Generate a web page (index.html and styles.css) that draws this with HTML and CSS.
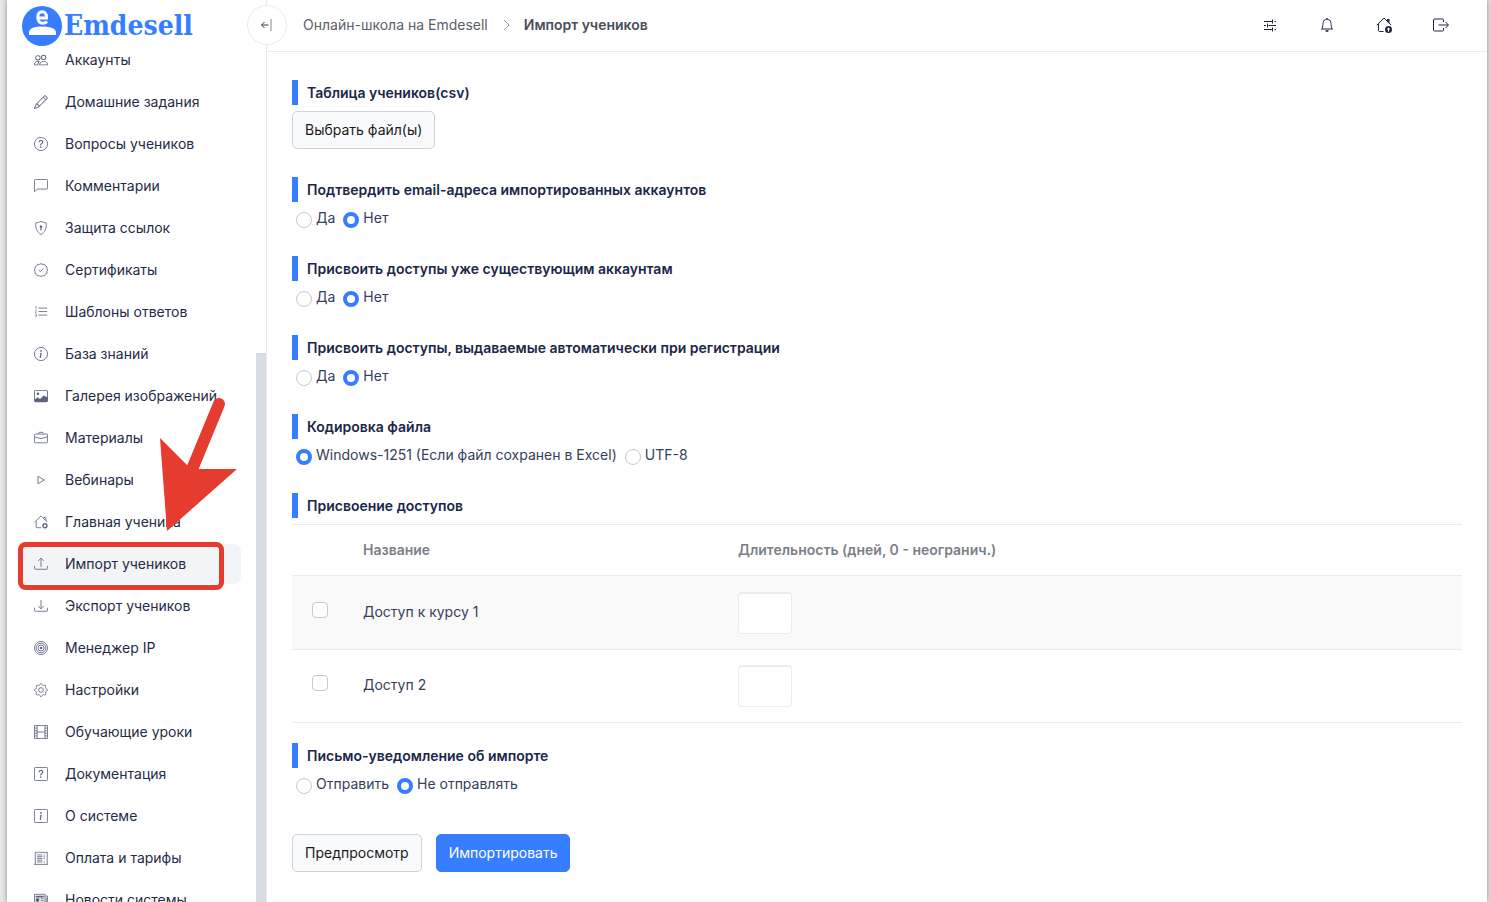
FILE: index.html
```html
<!DOCTYPE html>
<html lang="ru">
<head>
<meta charset="utf-8">
<title>Импорт учеников</title>
<link rel="stylesheet" href="styles.css">
</head>
<body>
<div class="app">
  <aside class="sidebar">
    <a class="logo" href="#">
      <svg class="logo-mark" viewBox="0 0 40 40" aria-hidden="true">
        <circle cx="20" cy="20" r="20" fill="#377dff"/>
        <path d="M7 29v-2.500c0-4 5-6 13-6s14 2 14 6V29z" fill="#fff"/>
        <ellipse cx="20.500" cy="12" rx="7.500" ry="8.500" fill="#377dff"/>
        <path d="M16.500 12H24.500C24.500 7.800 23 5.800 20.300 5.800C17.500 5.800 15.800 8 15.800 11.500C15.800 15 17.700 17.300 20.800 17.300C22.700 17.300 24 16.500 25 15.500" fill="none" stroke="#fff" stroke-width="3"/>
      </svg>
      <span>Emdesell</span>
    </a>
    <nav class="menu">
      <a class="item" href="#"><svg class="icon" viewBox="0 0 16 16"><path d="M15 14s1 0 1-1-1-4-5-4-5 3-5 4 1 1 1 1h8zm-7.978-1A.261.261 0 0 1 7 12.996c.001-.264.167-1.030.76-1.720C8.312 10.629 9.282 10 11 10c1.717 0 2.687.630 3.240 1.276.593.690.758 1.457.760 1.720l-.008.002a.274.274 0 0 1-.014.002H7.022zM11 7a2 2 0 1 0 0-4 2 2 0 0 0 0 4zm3-2a3 3 0 1 1-6 0 3 3 0 0 1 6 0zM6.936 9.280a5.880 5.880 0 0 0-1.230-.247A7.350 7.350 0 0 0 5 9c-4 0-5 3-5 4 0 .667.333 1 1 1h4.216A2.238 2.238 0 0 1 5 13c0-1.010.377-2.042 1.090-2.904.243-.294.526-.569.846-.816zM4.920 10A5.493 5.493 0 0 0 4 13H1c0-.260.164-1.030.760-1.724.545-.636 1.492-1.256 3.160-1.275zM1.500 5.500a3 3 0 1 1 6 0 3 3 0 0 1-6 0zm3-2a2 2 0 1 0 0 4 2 2 0 0 0 0-4z"/></svg>Аккаунты</a>
      <a class="item" href="#"><svg class="icon" viewBox="0 0 16 16"><path d="M12.146.146a.5.5 0 0 1 .708 0l3 3a.5.5 0 0 1 0 .708l-10 10a.5.5 0 0 1-.168.110l-5 2a.5.5 0 0 1-.650-.650l2-5a.5.5 0 0 1 .110-.168l10-10zM11.207 2.500 13.500 4.793 14.793 3.500 12.500 1.207 11.207 2.500zm1.586 3L10.500 3.207 4 9.707V10h.5a.5.5 0 0 1 .5.5v.5h.5a.5.5 0 0 1 .5.5v.5h.293l6.500-6.500zm-9.761 5.175-.106.106-1.528 3.821 3.821-1.528.106-.106A.5.5 0 0 1 5 12.500V12h-.5a.5.5 0 0 1-.5-.5V11h-.5a.5.5 0 0 1-.468-.325z"/></svg>Домашние задания</a>
      <a class="item" href="#"><svg class="icon" viewBox="0 0 16 16"><circle class="line" cx="8" cy="8" r="7.500"/><path d="M5.255 5.786a.237.237 0 0 0 .241.247h.825c.138 0 .248-.113.266-.250.090-.656.540-1.134 1.342-1.134.686 0 1.314.343 1.314 1.168 0 .635-.374.927-.965 1.371-.673.489-1.206 1.060-1.168 1.987l.003.217a.250.250 0 0 0 .250.246h.811a.250.250 0 0 0 .250-.250v-.105c0-.718.273-.927 1.010-1.486.609-.463 1.244-.977 1.244-2.056 0-1.511-1.276-2.241-2.673-2.241-1.267 0-2.655.590-2.750 2.286zm1.557 5.763c0 .533.425.927 1.010.927.609 0 1.028-.394 1.028-.927 0-.552-.420-.940-1.029-.940-.584 0-1.009.388-1.009.940z"/></svg>Вопросы учеников</a>
      <a class="item" href="#"><svg class="icon" viewBox="0 0 16 16"><path class="line" d="M1.500.5h13a1 1 0 0 1 1 1v9a1 1 0 0 1-1 1H4.500a2 2 0 0 0-1.200.500L.5 14.500v-13a1 1 0 0 1 1-1z"/></svg>Комментарии</a>
      <a class="item" href="#"><svg class="icon" viewBox="0 0 16 16"><path class="line" d="M8 .5C6.500 1 4 2 2 2.400 1.500 8 3.500 13 8 15.500 12.500 13 14.500 8 14 2.400 12 2 9.500 1 8 .5z"/><path d="M9.500 6.500a1.500 1.500 0 0 1-1 1.415l.385 1.990a.5.5 0 0 1-.491.595h-.788a.5.5 0 0 1-.490-.595l.384-1.990A1.500 1.500 0 1 1 9.500 6.500z"/></svg>Защита ссылок</a>
      <a class="item" href="#"><svg class="icon" viewBox="0 0 16 16"><path class="line" d="M8 .7 9.800 1.600 12 1.500 13.100 3.400 14.900 4.500 14.700 6.500 15.600 8 14.700 9.700 14.900 11.700 13 12.900 12 14.700 9.800 14.500 8 15.400 6.200 14.500 4 14.700 2.900 12.900 1.100 11.700 1.300 9.700.4 8 1.300 6.500 1.100 4.500 2.900 3.400 4 1.500 6.200 1.600z"/><path class="line" d="m5.500 8 1.800 1.800 3.200-3.400"/></svg>Сертификаты</a>
      <a class="item" href="#"><svg class="icon" viewBox="0 0 16 16"><path class="line" d="M5 3.500h10M5 7.500h10M5 11.500h10"/><path class="line" stroke-width=".700" d="M1.500 2l1-.500V5M1.400 6.400h1.300L1.500 9h1.400M1.400 10.500h1.300v3H1.400M1.700 12h1"/></svg>Шаблоны ответов</a>
      <a class="item" href="#"><svg class="icon" viewBox="0 0 16 16"><circle class="line" cx="8" cy="8" r="7.500"/><path d="m8.930 6.588-2.290.287-.082.380.450.083c.294.070.352.176.288.469l-.738 3.468c-.194.897.105 1.319.808 1.319.545 0 1.178-.252 1.465-.598l.088-.416c-.200.176-.492.246-.686.246-.275 0-.375-.193-.304-.533L8.930 6.588zM9 4.500a1 1 0 1 1-2 0 1 1 0 0 1 2 0z"/></svg>База знаний</a>
      <a class="item" href="#"><svg class="icon" viewBox="0 0 16 16"><path d="M.002 3a2 2 0 0 1 2-2h12a2 2 0 0 1 2 2v10a2 2 0 0 1-2 2h-12a2 2 0 0 1-2-2V3zm1 9 2.646-2.354a.5.5 0 0 1 .630-.062l2.660 1.773 3.710-3.710a.5.5 0 0 1 .577-.094L15.002 9.500V3a1 1 0 0 0-1-1h-12a1 1 0 0 0-1 1v9zm5-6.500a1.500 1.500 0 1 1-3 0 1.500 1.500 0 0 1 3 0z"/></svg>Галерея изображений</a>
      <a class="item" href="#"><svg class="icon" viewBox="0 0 16 16"><path class="line" d="M1.500 3.500h13a1 1 0 0 1 1 1v8a1 1 0 0 1-1 1h-13a1 1 0 0 1-1-1v-8a1 1 0 0 1 1-1zM5.500 3.300v-.800a1 1 0 0 1 1-1h3a1 1 0 0 1 1 1v.800M.5 6.700 8 8.700l7.500-2"/></svg>Материалы</a>
      <a class="item" href="#"><svg class="icon" viewBox="0 0 16 16"><path class="line" d="M4.500 3.800v8.400L11.800 8z"/></svg>Вебинары</a>
      <a class="item" href="#"><svg class="icon" viewBox="0 0 16 16"><path class="line" d="M.8 8.200 8 1l7.200 7.200M11.500 4V2.500h2v4M2.500 7v6.500a1 1 0 0 0 1 1H8"/><circle class="line" cx="12.500" cy="12.300" r="2.300" stroke-width="1.600"/></svg>Главная ученика</a>
      <a class="item active" href="#" aria-current="page"><svg class="icon" viewBox="0 0 16 16"><path class="line" d="M.5 10v3a1 1 0 0 0 1 1h13a1 1 0 0 0 1-1v-3M8 11.500v-10M4.800 4.500 8 1.300l3.200 3.200"/></svg>Импорт учеников</a>
      <a class="item" href="#"><svg class="icon" viewBox="0 0 16 16"><path class="line" d="M.5 10v3a1 1 0 0 0 1 1h13a1 1 0 0 0 1-1v-3M8 1v10M4.800 8 8 11.200 11.200 8"/></svg>Экспорт учеников</a>
      <a class="item" href="#"><svg class="icon" viewBox="0 0 16 16"><circle class="line" cx="8" cy="8" r="7.500"/><circle class="line" cx="8" cy="8" r="5.500"/><circle class="line" cx="8" cy="8" r="3.500"/><circle cx="8" cy="8" r="1.500"/></svg>Менеджер IP</a>
      <a class="item" href="#"><svg class="icon" viewBox="0 0 16 16"><circle class="line" cx="8" cy="8" r="2.700"/><path class="line" d="M6.700 1.600c.4-1.300 2.200-1.300 2.600 0l.2.600c.2.700 1 1 1.600.7l.5-.3c1.200-.6 2.500.6 1.800 1.800l-.3.600c-.3.600 0 1.400.7 1.600l.6.200c1.300.4 1.300 2.200 0 2.600l-.6.200c-.7.200-1 1-.7 1.600l.3.500c.7 1.200-.6 2.500-1.800 1.900l-.5-.3c-.6-.4-1.400 0-1.600.7l-.2.500c-.4 1.300-2.200 1.300-2.600 0l-.2-.5c-.2-.7-1-1-1.600-.7l-.5.300c-1.200.6-2.500-.7-1.800-1.900l.2-.5c.4-.6 0-1.400-.6-1.600l-.6-.2c-1.300-.4-1.300-2.200 0-2.600l.6-.2c.7-.2 1-1 .6-1.600l-.2-.6C1.900 3.200 3.200 2 4.400 2.600l.5.300c.6.300 1.400 0 1.600-.7z"/></svg>Настройки</a>
      <a class="item" href="#"><svg class="icon" viewBox="0 0 16 16"><path class="line" d="M.5.5h15v15H.5zM3.500.5v15M12.500.5v15M3.500 8h9M.5 3.500h3M.5 6.500h3M.5 9.500h3M.5 12.500h3M12.500 3.500h3M12.500 6.500h3M12.500 9.500h3M12.500 12.500h3"/></svg>Обучающие уроки</a>
      <a class="item" href="#"><svg class="icon" viewBox="0 0 16 16"><rect class="line" x=".5" y=".5" width="15" height="15" rx="1"/><path d="M5.255 5.786a.237.237 0 0 0 .241.247h.825c.138 0 .248-.113.266-.250.090-.656.540-1.134 1.342-1.134.686 0 1.314.343 1.314 1.168 0 .635-.374.927-.965 1.371-.673.489-1.206 1.060-1.168 1.987l.003.217a.250.250 0 0 0 .250.246h.811a.250.250 0 0 0 .250-.250v-.105c0-.718.273-.927 1.010-1.486.609-.463 1.244-.977 1.244-2.056 0-1.511-1.276-2.241-2.673-2.241-1.267 0-2.655.590-2.750 2.286zm1.557 5.763c0 .533.425.927 1.010.927.609 0 1.028-.394 1.028-.927 0-.552-.420-.940-1.029-.940-.584 0-1.009.388-1.009.940z"/></svg>Документация</a>
      <a class="item" href="#"><svg class="icon" viewBox="0 0 16 16"><rect class="line" x=".5" y=".5" width="15" height="15" rx="1"/><path d="m8.930 6.588-2.290.287-.082.380.450.083c.294.070.352.176.288.469l-.738 3.468c-.194.897.105 1.319.808 1.319.545 0 1.178-.252 1.465-.598l.088-.416c-.200.176-.492.246-.686.246-.275 0-.375-.193-.304-.533L8.930 6.588zM9 4.500a1 1 0 1 1-2 0 1 1 0 0 1 2 0z"/></svg>О системе</a>
      <a class="item" href="#"><svg class="icon" viewBox="0 0 16 16"><path class="line" d="M1.500 15V1.200l1.100.8 1.100-.8 1.100.8 1.100-.8 1.100.8 1.100-.8 1.100.8 1.100-.8 1.100.8 1.100-.8 1.100.8 1.500-.8V15M0 15.300h16M3.500 4.500h6M3.500 6.500h6M3.500 8.500h6M3.500 10.500h6M3.500 12.500h6M11 4.500h1.500M11 6.500h1.500M11 8.500h1.500M11 12.500h1.500"/></svg>Оплата и тарифы</a>
      <a class="item" href="#"><svg class="icon" viewBox="0 0 16 16"><path class="line" d="M.5 1.500h12v13h-11a1 1 0 0 1-1-1zM12.500 3.500h3v10a1 1 0 0 1-1 1h-2M2 4h9M2 9.500h4M2 11.500h4M7.500 6.500H11M7.500 8.500H11M7.500 10.500H11M7.500 12.500H11M14 5v8"/><path d="M2 3h9v2H2zM2 6h4v3H2z"/></svg>Новости системы</a>
    </nav>
    <div class="scroll-thumb"></div>
    <button class="collapse" type="button" aria-label="Свернуть меню"><svg viewBox="0 0 14 14" aria-hidden="true"><path d="M8.500 7H1.500M4.500 4 1.500 7l3 3" /><path class="bar" d="M11 1v12"/></svg></button>
  </aside>

  <div class="page">
    <header class="topbar">
      <nav class="crumbs" aria-label="Навигация">
        <a href="#">Онлайн-школа на Emdesell</a>
        <svg viewBox="0 0 10 10" aria-hidden="true"><path d="M3 0l5 5-5 5"/></svg>
        <span class="current">Импорт учеников</span>
      </nav>
      <div class="actions">
        <button type="button" aria-label="Параметры"><svg viewBox="0 0 16 16"><path class="line" d="M2 4.500h8M12.500 4.500H14M2 8.500h2M6.500 8.500H14M2 12.500h8M12.500 12.500H14M10.500 2.500v4M5.500 6.500v4M10.500 10.500v4"/></svg></button>
        <button type="button" aria-label="Уведомления"><svg class="bell" viewBox="0 0 16 16"><path d="M8 16a2 2 0 0 0 2-2H6a2 2 0 0 0 2 2zM8 1.918l-.797.161A4.002 4.002 0 0 0 4 6c0 .628-.134 2.197-.459 3.742-.160.767-.376 1.566-.663 2.258h10.244c-.287-.692-.502-1.490-.663-2.258C12.134 8.197 12 6.628 12 6a4.002 4.002 0 0 0-3.203-3.920L8 1.917zM14.220 12c.223.447.481.801.780 1H1c.299-.199.557-.553.780-1C2.680 10.200 3 6.880 3 6c0-2.420 1.720-4.440 4.005-4.901a1 1 0 1 1 1.990 0A5.002 5.002 0 0 1 13 6c0 .880.320 4.200 1.220 6z"/></svg></button>
        <button type="button" aria-label="Главная"><svg viewBox="0 0 16 16"><path class="line" d="M.8 8.200 8 1l7.200 7.200M2.500 7v6.500a1 1 0 0 0 1 1h4"/><path d="M11 2h2.500v5L11 4.500zM12.500 9a3.500 3.500 0 1 1 0 7 3.500 3.500 0 0 1 0-7zm0 1.500-1.800 1.900h1.300v2.300h1v-2.300h1.300z"/></svg></button>
        <button type="button" aria-label="Выход"><svg viewBox="0 0 16 16"><path class="line" d="M10.500 5V3a1 1 0 0 0-1-1h-8a1 1 0 0 0-1 1v10a1 1 0 0 0 1 1h8a1 1 0 0 0 1-1v-2M5.500 8H15M12.500 5l3 3-3 3"/></svg></button>
      </div>
    </header>

    <main>
      <form class="form">
        <section class="field">
          <h2>Таблица учеников(csv)</h2>
          <button class="btn" type="button">Выбрать файл(ы)</button>
        </section>
        <section class="field">
          <h2>Подтвердить email-адреса импортированных аккаунтов</h2>
          <div class="choices">
            <label><input type="radio" name="confirm">Да</label>
            <label><input type="radio" name="confirm" checked>Нет</label>
          </div>
        </section>
        <section class="field">
          <h2>Присвоить доступы уже существующим аккаунтам</h2>
          <div class="choices">
            <label><input type="radio" name="existing">Да</label>
            <label><input type="radio" name="existing" checked>Нет</label>
          </div>
        </section>
        <section class="field">
          <h2>Присвоить доступы, выдаваемые автоматически при регистрации</h2>
          <div class="choices">
            <label><input type="radio" name="auto">Да</label>
            <label><input type="radio" name="auto" checked>Нет</label>
          </div>
        </section>
        <section class="field">
          <h2>Кодировка файла</h2>
          <div class="choices">
            <label><input type="radio" name="enc" checked>Windows-1251 (Если файл сохранен в Excel)</label>
            <label><input type="radio" name="enc">UTF-8</label>
          </div>
        </section>
        <section class="field access">
          <h2>Присвоение доступов</h2>
          <table>
            <thead>
              <tr><th class="check"></th><th class="name">Название</th><th>Длительность (дней, 0 - неогранич.)</th></tr>
            </thead>
            <tbody>
              <tr>
                <td class="check"><input type="checkbox" id="a1"></td>
                <td class="title"><label for="a1">Доступ к курсу 1</label></td>
                <td><input class="days" type="text" aria-label="Длительность, доступ к курсу 1"></td>
              </tr>
              <tr>
                <td class="check"><input type="checkbox" id="a2"></td>
                <td class="title"><label for="a2">Доступ 2</label></td>
                <td><input class="days" type="text" aria-label="Длительность, доступ 2"></td>
              </tr>
            </tbody>
          </table>
        </section>
        <section class="field">
          <h2>Письмо-уведомление об импорте</h2>
          <div class="choices">
            <label><input type="radio" name="mail">Отправить</label>
            <label><input type="radio" name="mail" checked>Не отправлять</label>
          </div>
        </section>
        <div class="submit">
          <button class="btn" type="button">Предпросмотр</button>
          <button class="btn primary" type="button">Импортировать</button>
        </div>
      </form>
    </main>
  </div>
  <svg class="pointer" viewBox="0 0 224 196" aria-hidden="true">
    <path d="M205 9 179 72" fill="none" stroke="#e63c30" stroke-width="12" stroke-linecap="round"/>
    <path d="M146 43 173 70 184 74H223L153 136z" fill="#e63c30"/>
    <rect x="6.500" y="149.500" width="201" height="43" rx="5" fill="none" stroke="#e63c30" stroke-width="5"/>
  </svg>
</div>
</body>
</html>
```
FILE: styles.css
```css
* {
  box-sizing: border-box;
}

body {
  margin: 0;
  height: 100vh;
  overflow: hidden;
  padding: 0 3px 0 7px;
  background: #e6e6e6;
  color: #1e2022;
  font: 400 14px/20px Inter, sans-serif;
}

a {
  color: inherit;
  text-decoration: none;
}

button,
input {
  font: inherit;
  color: inherit;
}

.app {
  position: relative;
  display: flex;
  height: 100%;
  background: #fff;
  box-shadow: 0 0 5px rgba(0, 0, 0, 0.4);
}

.sidebar {
  position: relative;
  flex: 0 0 260px;
  display: flex;
  flex-direction: column;
  border-right: 1px solid #e9eaef;
}

.logo {
  display: flex;
  align-items: center;
  gap: 2px;
  height: 40px;
  padding: 11px 0 0 15px;
  color: #377dff;
  font: 700 28px/40px "DejaVu Serif Condensed", "DejaVu Serif", serif;
  font-stretch: condensed;
}

.logo-mark {
  width: 40px;
  height: 40px;
  flex: none;
}

.menu {
  flex: 1;
  min-height: 0;
  overflow: hidden;
  display: flex;
  flex-direction: column;
  gap: 2px;
  padding: 0 25px 0 12px;
}

.item {
  flex: none;
  display: flex;
  align-items: center;
  gap: 17px;
  height: 40px;
  padding-left: 15px;
  border-radius: 8px;
  color: #252b47;
}

.item.active {
  background: #f3f4f6;
}

.icon {
  width: 14px;
  height: 14px;
  fill: #5f6580;
}

.line {
  fill: none;
  stroke: #656b86;
}

.scroll-thumb {
  position: absolute;
  top: 353px;
  right: 0;
  bottom: 0;
  width: 10px;
  background: #d8dce4;
}

.collapse {
  position: absolute;
  top: 5px;
  right: -21px;
  display: grid;
  place-items: center;
  width: 40px;
  height: 40px;
  padding: 0;
  border: 1px solid #e9eaef;
  border-radius: 50%;
  background: #fff;
}

.collapse svg {
  width: 14px;
  height: 14px;
  fill: none;
  stroke: #3c3f45;
}

.collapse .bar {
  stroke: #888;
}

.page {
  flex: 1;
  min-width: 0;
}

.topbar {
  display: flex;
  align-items: center;
  justify-content: space-between;
  height: 52px;
  padding: 0 37px 1px 36px;
  border-bottom: 1px solid #ebebeb;
}

.crumbs {
  display: flex;
  align-items: center;
  gap: 13px;
  color: #5a5f6b;
}

.crumbs svg {
  width: 10px;
  height: 10px;
  fill: none;
  stroke: #999;
}

.crumbs .current {
  color: #4a4f59;
  font-weight: 600;
}

.actions {
  display: flex;
  gap: 39px;
}

.actions button {
  display: grid;
  place-items: center;
  width: 18px;
  height: 18px;
  padding: 0;
  border: 0;
  background: none;
}

.actions svg {
  width: 16px;
  height: 16px;
  fill: #20253d;
}

.actions .bell {
  width: 14px;
  height: 14px;
}

.actions .line {
  stroke: #20253d;
}

.form {
  display: flex;
  flex-direction: column;
  gap: 28px;
  padding: 28px 25px;
}

.field {
  display: flex;
  flex-direction: column;
  align-items: flex-start;
  gap: 6px;
}

.access {
  margin-bottom: -8px;
}

h2 {
  margin: 0;
  padding-left: 9px;
  border-left: 6px solid #377dff;
  color: #1a2747;
  font-size: 14px;
  font-weight: 600;
  line-height: 25px;
}

.btn {
  height: 38px;
  padding: 0 12px;
  border: 1px solid #d0d3d8;
  border-radius: 5px;
  background: #f9fafc;
  color: #1a1a1a;
}

.btn.primary {
  border-color: #377dff;
  background: #377dff;
  color: #fff;
}

.choices {
  display: flex;
  gap: 8px;
  padding-left: 4px;
  color: #36405a;
}

.choices label {
  display: flex;
  align-items: flex-end;
  gap: 4px;
}

input[type="radio"],
input[type="checkbox"] {
  appearance: none;
  display: block;
  width: 16px;
  height: 16px;
  margin: 0;
  border: 1px solid #c9c9cc;
  background: #fff;
}

input[type="radio"] {
  border-radius: 50%;
}

input[type="radio"]:checked {
  border: 4px solid #377dff;
}

input[type="checkbox"] {
  border-radius: 4px;
}

table {
  width: 100%;
  border-collapse: separate;
  border-spacing: 0;
  table-layout: fixed;
  border-top: 1px solid #ebebee;
  color: #36405a;
}

th,
td {
  height: 74px;
  padding: 0;
  border-bottom: 1px solid #ebebee;
  text-align: left;
}

tbody tr:last-child td {
  height: 73px;
}

th {
  height: 51px;
  color: #7b8088;
  font-weight: 600;
}

.check {
  width: 71px;
  padding: 0 0 6px 20px;
}

.name {
  width: 375px;
}

.title {
  padding-bottom: 2px;
}

tbody tr:nth-child(odd) {
  background: #f9f9f9;
}

.days {
  display: block;
  width: 54px;
  height: 42px;
  padding: 8px;
  border: 1px solid #ebebf1;
  border-top-width: 2px;
  border-radius: 4px;
  background: #fff;
}

.submit {
  display: flex;
  gap: 14px;
  padding-top: 12px;
}

.pointer {
  position: absolute;
  top: 395px;
  left: 7px;
  width: 224px;
  height: 196px;
  pointer-events: none;
}
```
